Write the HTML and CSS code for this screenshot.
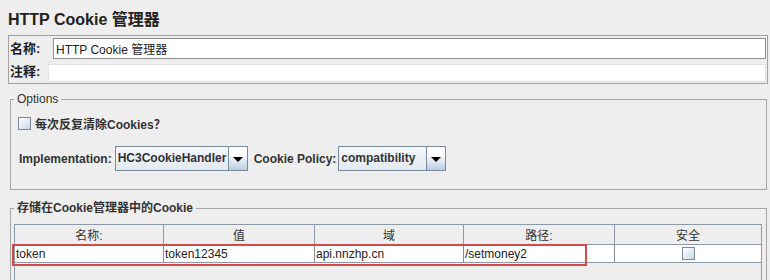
FILE: index.html
```html
<!DOCTYPE html>
<html lang="zh">
<head>
    <meta charset="UTF-8">
    <title>HTTP Cookie 管理器</title>
    <link rel="stylesheet" href="styles.css">
</head>
<body>
    <div class="title">HTTP Cookie 管理器</div>

    <!-- 名称 / 注释 -->
    <div class="name-panel">
        <div class="name-row">
            <label class="name-label">名称:</label>
            <input class="field" type="text" value="HTTP Cookie 管理器">
        </div>
        <div class="name-row">
            <label class="name-label comment-label">注释:</label>
            <input class="field comment" type="text" value="">
        </div>
    </div>

    <fieldset class="group options">
        <legend>Options</legend>
        <div class="check-row">
            <span class="checkbox"></span>
            <span class="check-text">每次反复清除Cookies？</span>
        </div>
        <div class="combo-row">
            <span class="combo-label impl-label">Implementation:</span>
            <div class="combo impl-combo">
                <span class="combo-value">HC3CookieHandler</span>
                <span class="combo-arrow"></span>
            </div>
            <span class="combo-label policy-label">Cookie Policy:</span>
            <div class="combo policy-combo">
                <span class="combo-value">compatibility</span>
                <span class="combo-arrow"></span>
            </div>
        </div>
    </fieldset>

    <fieldset class="group cookies">
        <legend class="bold-legend">存储在Cookie管理器中的Cookie</legend>
        <div class="table-pane">
            <table class="cookie-table">
                <thead>
                    <tr>
                        <th class="col-name">名称:</th>
                        <th class="col-value">值</th>
                        <th class="col-domain">域</th>
                        <th class="col-path">路径:</th>
                        <th class="col-secure">安全</th>
                    </tr>
                </thead>
                <tbody>
                    <tr>
                        <td>token</td>
                        <td>token12345</td>
                        <td>api.nnzhp.cn</td>
                        <td>/setmoney2</td>
                        <td class="secure-cell"><span class="checkbox"></span></td>
                    </tr>
                </tbody>
            </table>
            <!-- 红框标注 -->
            <div class="highlight"></div>
        </div>
    </fieldset>
</body>
</html>
```

FILE: styles.css
```css
body {
    margin: 0;
    background-color: #eeeeee;
    font-family: "Liberation Sans", "Noto Sans CJK SC", sans-serif;
    font-size: 12px;
    color: #333333;
    overflow: hidden;
}

.title {
    margin: 0 0 5px 8px;
    padding-top: 10px;
    font-size: 16px;
    line-height: 20px;
    font-weight: bold;
    color: #222222;
}

/* 名称 / 注释 */
.name-panel {
    margin: 0 2px 0 8px;
    border: 1px solid #a3a3a3;
    padding: 0 1px 1px 0;
}

.name-row {
    display: flex;
    align-items: center;
}

.name-label {
    width: 44px;
    padding-left: 1px;
    box-sizing: border-box;
    font-size: 13px;
    font-weight: bold;
    color: #222222;
}

.comment-label {
    width: 39px;
}

.field {
    flex: 1;
    box-sizing: border-box;
    height: 21px;
    margin-top: 2px;
    padding: 0 2px;
    border: 1px solid #8e8e8e;
    background-color: #ffffff;
    font-family: inherit;
    font-size: 12px;
    color: #222222;
    outline: none;
}

.comment {
    height: 18px;
    margin-top: 5px;
    border-color: #e2e2e2;
}

/* 分组框 */
.group {
    margin: 8px 3px 0 10px;
    border: 1px solid #a5a5a5;
    padding: 0 0 18px 3px;
    min-inline-size: 0;
}

.group legend {
    padding: 0 3px;
    line-height: 14px;
    font-size: 12px;
    color: #333333;
}

.bold-legend {
    font-weight: bold;
}

.checkbox {
    display: inline-block;
    width: 13px;
    height: 13px;
    box-sizing: border-box;
    border: 1px solid #7a8a99;
    background: linear-gradient(135deg, #ffffff, #c7d6e6);
}

.check-row {
    display: flex;
    align-items: center;
    gap: 4px;
    margin: 11px 0 0 4px;
    height: 13px;
}

.check-text {
    font-weight: bold;
    color: #333333;
}

.combo-row {
    display: flex;
    align-items: center;
    margin-top: 16px;
}

.combo-label {
    font-weight: bold;
    color: #333333;
}

.impl-label {
    margin: 0 3px 0 5px;
}

.policy-label {
    margin: 0 2px 0 6px;
}

.combo {
    display: flex;
    height: 25px;
    box-sizing: border-box;
    border: 1px solid #7a8a99;
    background: linear-gradient(#f4f7fa, #e2e9f0);
}

.impl-combo {
    width: 133px;
}

.policy-combo {
    width: 108px;
}

.combo-value {
    flex: 1;
    padding-left: 2px;
    line-height: 23px;
    font-weight: bold;
    color: #333333;
}

.combo-arrow {
    position: relative;
    width: 18px;
    border-left: 1px solid #7a8a99;
    background: linear-gradient(#ffffff 30%, #b9cde2);
}

.combo-arrow::after {
    content: "";
    position: absolute;
    left: 4px;
    top: 10px;
    border-left: 5px solid transparent;
    border-right: 5px solid transparent;
    border-top: 5px solid #000000;
}

/* Cookie 表格 */
.cookies {
    margin-top: 11px;
    padding-right: 4px;
}

.table-pane {
    position: relative;
    margin-top: 9px;
    height: 80px;
    border: 1px solid #8c9aa8;
}

.cookie-table {
    width: 100%;
    border-collapse: collapse;
    table-layout: fixed;
}

.cookie-table th {
    height: 19px;
    padding: 0;
    font-weight: normal;
    color: #333333;
    background-color: #eeeeee;
    border-right: 1px solid #8c9aa8;
    border-bottom: 1px solid #8c9aa8;
}

.cookie-table td {
    height: 17px;
    padding: 0 1px;
    color: #222222;
    background-color: #ffffff;
    border-right: 1px solid #8c8c8c;
    border-bottom: 1px solid #8c9aa8;
    white-space: nowrap;
}

.cookie-table th:last-child,
.cookie-table td:last-child {
    border-right: none;
}

.col-name { width: 148px; }
.col-value { width: 150px; }
.col-domain { width: 148px; }
.col-path { width: 150px; }

.secure-cell {
    text-align: center;
    line-height: 0;
}

.highlight {
    position: absolute;
    left: -3px;
    top: 19px;
    width: 575px;
    height: 22px;
    box-sizing: border-box;
    border: 2px solid #d24b4b;
}
```
